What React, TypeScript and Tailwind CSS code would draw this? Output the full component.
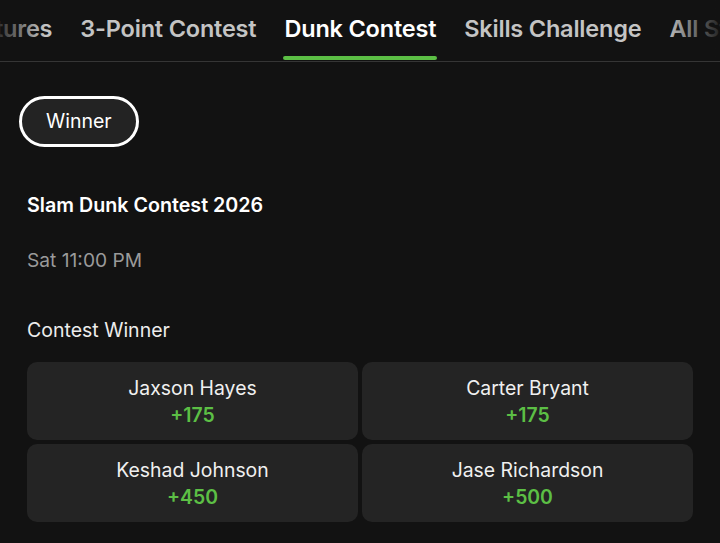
import React from "react";

const tabs = ["Futures", "3-Point Contest", "Dunk Contest", "Skills Challenge", "All Star Game"];

const runners = [
  { name: "Jaxson Hayes", odds: "+175" },
  { name: "Carter Bryant", odds: "+175" },
  { name: "Keshad Johnson", odds: "+450" },
  { name: "Jase Richardson", odds: "+500" },
];

function TabBar() {
  return (
    <div className="relative h-[62px] overflow-hidden border-b border-[#353535]">
      <div className="flex h-full ml-[-32px] gap-[28px] whitespace-nowrap">
        {tabs.map((t) => {
          const active = t === "Dunk Contest";
          return (
            <div key={t} className="relative flex h-full items-center pb-[3px]">
              <span
                className={`text-[23.5px] font-semibold tracking-[-0.2px] ${
                  active ? "text-white" : "text-[#c4c4c4]"
                }`}
              >
                {t}
              </span>
              {active && (
                <span className="absolute bottom-[1px] left-[-1px] right-[-1px] h-[4px] rounded-full bg-[#5cbf45]" />
              )}
            </div>
          );
        })}
      </div>
      <div className="pointer-events-none absolute inset-y-0 left-0 w-[45px] bg-gradient-to-r from-[#121212]/80 to-transparent" />
      <div className="pointer-events-none absolute inset-y-0 right-0 w-[55px] bg-gradient-to-l from-[#121212]/90 to-transparent" />
    </div>
  );
}

export default function App() {
  return (
    <div
      className="h-[543px] w-[720px] overflow-hidden bg-[#121212] text-white"
      style={{ fontFamily: "Inter, 'Noto Sans', sans-serif" }}
    >
      <TabBar />
      <div className="px-[19px] pt-[34px]">
        <button className="h-[51px] rounded-full border-[3px] border-white bg-[#232323] px-[24px] text-[19.5px] text-white">
          Winner
        </button>
      </div>
      <div className="px-[27px]">
        <h2 className="mt-[46px] text-[19.7px] font-semibold leading-[24px]">Slam Dunk Contest 2026</h2>
        <p className="mt-[31px] text-[19.2px] leading-[24px] text-[#9a9a9a]">Sat 11:00 PM</p>
        <p className="mt-[46px] text-[19.5px] leading-[24px] text-[#ececec]">Contest Winner</p>
        <div className="mt-[20px] grid grid-cols-2 gap-[4px]">
          {runners.map((r) => (
            <div
              key={r.name}
              className="flex h-[78px] flex-col items-center justify-center rounded-[10px] bg-[#242424]"
            >
              <span className="text-[19.4px] leading-[28px] text-[#f0f0f0]">{r.name}</span>
              <span className="text-[19.4px] font-semibold leading-[26px] text-[#5cbf45]">{r.odds}</span>
            </div>
          ))}
        </div>
      </div>
    </div>
  );
}
